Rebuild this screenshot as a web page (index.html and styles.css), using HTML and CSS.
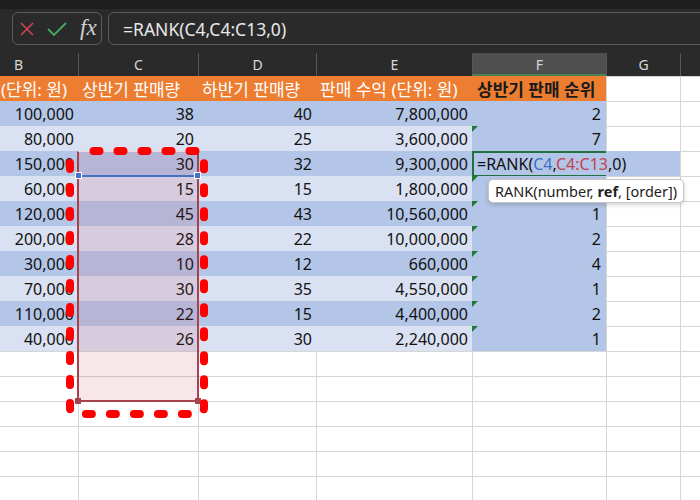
FILE: index.html
```html
<!DOCTYPE html>
<html lang="ko">
<head>
<meta charset="utf-8">
<title>RANK</title>
<link rel="stylesheet" href="styles.css">
</head>
<body>
<div class="app">
  <div class="topstrip"></div>
  <div class="fbar">
    <div class="fxbox">
      <svg class="ic" width="14" height="14" viewBox="0 0 14 14"><path d="M1 1L13 13M13 1L1 13" stroke="#d0454f" stroke-width="1.6" fill="none"/></svg>
      <svg class="ic" width="20" height="14" viewBox="0 0 20 14"><path d="M1 7L7 13L19 1" stroke="#46a95f" stroke-width="1.8" fill="none"/></svg>
      <span class="fx">fx</span>
    </div>
    <div class="finput">=RANK(C4,C4:C13,0)</div>
  </div>
  <div class="sheet">
    <div class="row">
      <div class="ch first">B</div><div class="ch">C</div><div class="ch">D</div><div class="ch">E</div><div class="ch sel">F</div><div class="ch">G</div><div class="ch"></div>
    </div>
    <div class="row">
      <div class="hd b">판매 단가 (단위: 원)</div><div class="hd">상반기 판매량</div><div class="hd">하반기 판매량</div><div class="hd">판매 수익 (단위: 원)</div><div class="hd rank">상반기 판매 순위</div><div class="g"></div><div class="g"></div>
    </div>
    <div class="row dark"><div class="n t">100,000</div><div class="n t">38</div><div class="n t">40</div><div class="n t">7,800,000</div><div class="n f">2</div><div class="g"></div><div class="g"></div></div>
    <div class="row light"><div class="n t">80,000</div><div class="n t">20</div><div class="n t">25</div><div class="n t">3,600,000</div><div class="n f warn">7</div><div class="g"></div><div class="g"></div></div>
    <div class="row dark"><div class="n t">150,000</div><div class="n t">30</div><div class="n t">32</div><div class="n t">9,300,000</div><div class="f editcell"><div class="edit"><span>=RANK(<span class="rb">C4</span>,<span class="rr">C4:C13</span>,0)</span></div></div><div class="g"></div></div>
    <div class="row light"><div class="n t">60,000</div><div class="n t">15</div><div class="n t">15</div><div class="n t">1,800,000</div><div class="n f warn"></div><div class="g"></div><div class="g"></div></div>
    <div class="row dark"><div class="n t">120,000</div><div class="n t">45</div><div class="n t">43</div><div class="n t">10,560,000</div><div class="n f warn">1</div><div class="g"></div><div class="g"></div></div>
    <div class="row light"><div class="n t">200,000</div><div class="n t">28</div><div class="n t">22</div><div class="n t">10,000,000</div><div class="n f warn">2</div><div class="g"></div><div class="g"></div></div>
    <div class="row dark"><div class="n t">30,000</div><div class="n t">10</div><div class="n t">12</div><div class="n t">660,000</div><div class="n f warn">4</div><div class="g"></div><div class="g"></div></div>
    <div class="row light"><div class="n t">70,000</div><div class="n t">30</div><div class="n t">35</div><div class="n t">4,550,000</div><div class="n f warn">1</div><div class="g"></div><div class="g"></div></div>
    <div class="row dark"><div class="n t">110,000</div><div class="n t">22</div><div class="n t">15</div><div class="n t">4,400,000</div><div class="n f warn">2</div><div class="g"></div><div class="g"></div></div>
    <div class="row light"><div class="n t">40,000</div><div class="n t">26</div><div class="n t">30</div><div class="n t">2,240,000</div><div class="n f warn">1</div><div class="g"></div><div class="g"></div></div>
    <div class="row"><div class="g first"></div><div class="g"></div><div class="g"></div><div class="g"></div><div class="g"></div><div class="g"></div><div class="g"></div></div>
    <div class="row"><div class="g first"></div><div class="g"></div><div class="g"></div><div class="g"></div><div class="g"></div><div class="g"></div><div class="g"></div></div>
    <div class="row"><div class="g first"></div><div class="g"></div><div class="g"></div><div class="g"></div><div class="g"></div><div class="g"></div><div class="g"></div></div>
    <div class="row"><div class="g first"></div><div class="g"></div><div class="g"></div><div class="g"></div><div class="g"></div><div class="g"></div><div class="g"></div></div>
    <div class="row"><div class="g first"></div><div class="g"></div><div class="g"></div><div class="g"></div><div class="g"></div><div class="g"></div><div class="g"></div></div>
    <div class="row"><div class="g first"></div><div class="g"></div><div class="g"></div><div class="g"></div><div class="g"></div><div class="g"></div><div class="g"></div></div>

    <div class="range"><span class="hdl bl"></span><span class="hdl br"></span></div>
    <div class="cref"><span class="bh l"></span><span class="bh r"></span></div>
    <svg class="note" width="146" height="276" viewBox="0 0 146 276"><rect x="6" y="6" width="134" height="263" rx="6" fill="none" stroke="#ff0000" stroke-width="8" stroke-linecap="round" stroke-dasharray="6 18" stroke-dashoffset="6.5"/></svg>
    <div class="tip"><span>RANK(number, <b>ref</b>, [order])</span></div>
  </div>
</div>
</body>
</html>
```
FILE: styles.css
```css
* { box-sizing: border-box; }
html, body { margin: 0; padding: 0; }
body {
  width: 700px;
  height: 500px;
  overflow: hidden;
  background: #fff;
  font-family: "Noto Sans", "Noto Sans CJK KR", sans-serif;
}
.app {
  width: 700px;
  height: 500px;
  overflow: hidden;
  display: flex;
  flex-direction: column;
}
.topstrip { flex: none; height: 9px; background: #1e1e1e; }
.fbar {
  flex: none;
  height: 44px;
  background: #2a2a2a;
  display: flex;
  gap: 6px;
  padding: 3px 0 0 12px;
  overflow: hidden;
}
.fxbox {
  flex: none;
  width: 90px;
  height: 33px;
  border: 1px solid #5c5c5c;
  border-radius: 6px;
  display: flex;
  align-items: center;
  padding-left: 7px;
  gap: 13px;
}
.ic { display: block; flex: none; }
.fx {
  font-family: "Liberation Serif", "DejaVu Serif", serif;
  font-style: italic;
  font-size: 23px;
  color: #d2d2d2;
  line-height: 1;
  margin-top: -3px;
}
.finput {
  flex: none;
  width: 620px;
  height: 33px;
  border: 1px solid #5c5c5c;
  border-radius: 6px;
  padding-left: 14px;
  display: flex;
  align-items: center;
  color: #e8e8e8;
  font-size: 17.5px;
}
.sheet {
  flex: none;
  position: relative;
  display: grid;
  grid-template-columns: 78px 120px 118px 156px 134px 74px 20px;
  grid-template-rows: 23px repeat(17, 25px);
}
.row { display: contents; }
.ch {
  background: #2a2a2a;
  color: #d8d8d8;
  font-size: 14px;
  display: flex;
  align-items: center;
  justify-content: center;
  border-left: 1px solid #575757;
}
.ch.first { border-left: none; justify-content: flex-start; padding-left: 14px; }
.ch.sel { background: #4f4f4f; border-bottom: 2px solid #4b8158; padding-top: 2px; }
.hd {
  background: #ed7d31;
  color: #fff;
  font-size: 17px;
  padding-left: 4px;
  display: flex;
  align-items: center;
  white-space: nowrap;
  overflow: hidden;
}
.hd.b { justify-content: flex-end; padding-left: 0; padding-right: 11px; }
.hd.rank { color: #1a1a1a; font-weight: 700; padding-left: 5px; }
.n {
  display: flex;
  align-items: center;
  justify-content: flex-end;
  padding-right: 4px;
  font-size: 16px;
  color: #111;
  white-space: nowrap;
}
.dark > .t { background: #b4c6e7; }
.light > .t { background: #d9e1f2; }
.f { background: #b4c6e7; position: relative; padding-right: 5px; }
.warn::before {
  content: "";
  position: absolute;
  left: 0;
  top: 0;
  border-top: 6px solid #1e7b35;
  border-right: 6px solid transparent;
}
.g { background: #fff; border-top: 1px solid #d6d6d6; border-left: 1px solid #d6d6d6; }
.g.first { border-left: none; }
.editcell { grid-column: span 2; padding: 0; }
.edit {
  width: 134px;
  height: 26px;
  border: 2px solid #22703f;
  border-right: none;
  padding-left: 3px;
  display: flex;
  align-items: center;
  white-space: nowrap;
  font-size: 16px;
  color: #111;
}
.rb { color: #3f6fc4; }
.rr { color: #c2434f; }
.range {
  position: absolute;
  left: 77px;
  top: 98px;
  width: 122px;
  height: 251px;
  background: rgba(200, 60, 80, 0.12);
  border: 2px solid #a8434e;
  border-top: 1px solid #f0d8dc;
}
.hdl { position: absolute; width: 6px; height: 6px; background: #a8434e; bottom: -4px; }
.hdl.bl { left: -4px; }
.hdl.br { right: -4px; }
.cref {
  position: absolute;
  left: 78px;
  top: 122px;
  width: 120px;
  height: 2px;
  background: #4472c4;
}
.bh {
  position: absolute;
  top: -3px;
  width: 7px;
  height: 7px;
  background: #4472c4;
  border: 1px solid #fff;
}
.bh.l { left: -3px; }
.bh.r { right: -3px; }
.note { position: absolute; left: 64px; top: 92px; overflow: visible; }
.tip {
  position: absolute;
  left: 488px;
  top: 126px;
  height: 24px;
  padding: 0 6px;
  background: #fff;
  border: 1px solid #c6c6c6;
  border-radius: 5px;
  box-shadow: 0 2px 5px rgba(0, 0, 0, 0.18);
  font-size: 14.5px;
  color: #222;
  display: flex;
  align-items: center;
  white-space: nowrap;
}
.tip b { font-weight: 700; }
```
